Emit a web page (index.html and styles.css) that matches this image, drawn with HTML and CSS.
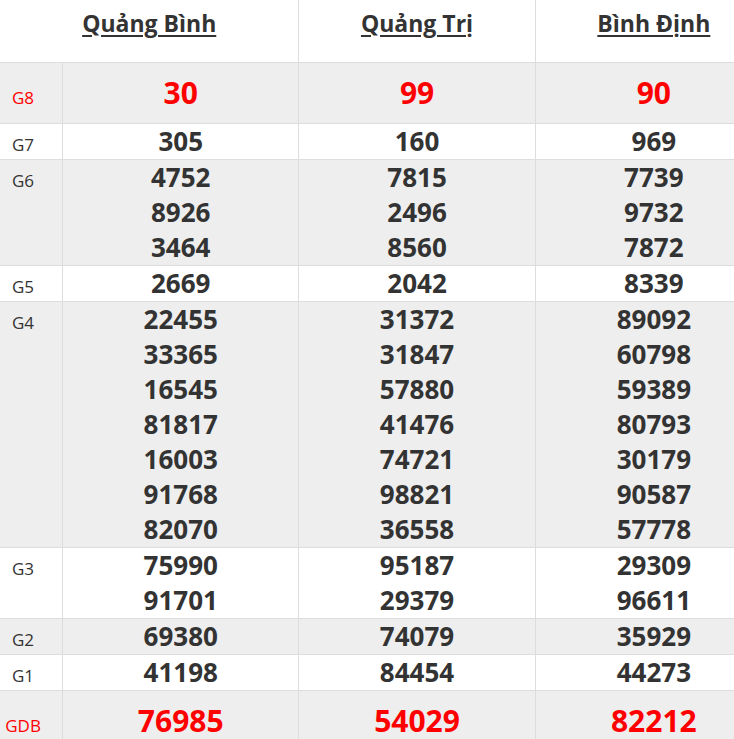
FILE: index.html
```html
<!DOCTYPE html>
<html lang="vi">
<head>
<meta charset="utf-8">
<title>Kết quả xổ số</title>
<link rel="stylesheet" href="styles.css">
</head>
<body>
<table class="kq">
  <colgroup>
    <col class="c-label">
    <col class="c-prov">
    <col class="c-prov">
    <col class="c-prov">
  </colgroup>
  <thead>
    <tr class="head">
      <th colspan="2" class="prov"><a href="#">Quảng Bình</a></th>
      <th class="prov"><a href="#">Quảng Trị</a></th>
      <th class="prov last"><a href="#">Bình Định</a></th>
    </tr>
  </thead>
  <tbody>
    <tr class="alt big">
      <td class="lbl red">G8</td>
      <td class="num red">30</td>
      <td class="num red">99</td>
      <td class="num red last">90</td>
    </tr>
    <tr>
      <td class="lbl">G7</td>
      <td class="num">305</td>
      <td class="num">160</td>
      <td class="num last">969</td>
    </tr>
    <tr class="alt">
      <td class="lbl">G6</td>
      <td class="num"><div>4752</div><div>8926</div><div>3464</div></td>
      <td class="num"><div>7815</div><div>2496</div><div>8560</div></td>
      <td class="num last"><div>7739</div><div>9732</div><div>7872</div></td>
    </tr>
    <tr>
      <td class="lbl">G5</td>
      <td class="num">2669</td>
      <td class="num">2042</td>
      <td class="num last">8339</td>
    </tr>
    <tr class="alt">
      <td class="lbl">G4</td>
      <td class="num"><div>22455</div><div>33365</div><div>16545</div><div>81817</div><div>16003</div><div>91768</div><div>82070</div></td>
      <td class="num"><div>31372</div><div>31847</div><div>57880</div><div>41476</div><div>74721</div><div>98821</div><div>36558</div></td>
      <td class="num last"><div>89092</div><div>60798</div><div>59389</div><div>80793</div><div>30179</div><div>90587</div><div>57778</div></td>
    </tr>
    <tr>
      <td class="lbl">G3</td>
      <td class="num"><div>75990</div><div>91701</div></td>
      <td class="num"><div>95187</div><div>29379</div></td>
      <td class="num last"><div>29309</div><div>96611</div></td>
    </tr>
    <tr class="alt">
      <td class="lbl">G2</td>
      <td class="num">69380</td>
      <td class="num">74079</td>
      <td class="num last">35929</td>
    </tr>
    <tr>
      <td class="lbl">G1</td>
      <td class="num">41198</td>
      <td class="num">84454</td>
      <td class="num last">44273</td>
    </tr>
    <tr class="alt big">
      <td class="lbl red">GDB</td>
      <td class="num red">76985</td>
      <td class="num red">54029</td>
      <td class="num red last">82212</td>
    </tr>
  </tbody>
</table>
</body>
</html>
```
FILE: styles.css
```css
html, body {
  margin: 0;
  padding: 0;
  overflow: hidden;
  background: #fff;
}

body {
  font-family: "Open Sans", "Liberation Sans", sans-serif;
  color: #333;
}

.kq {
  border-collapse: separate;
  border-spacing: 0;
  table-layout: fixed;
  width: 772px;
}

.c-label { width: 63px; }
.c-prov { width: 236px; }

.kq th,
.kq td {
  padding: 0;
  border-right: 1px solid #ddd;
  border-bottom: 1px solid #ddd;
  vertical-align: baseline;
}

.kq .last { border-right: 0; }

.head th {
  height: 62px;
  box-sizing: border-box;
  padding: 6px 0 21px;
  font-size: 23px;
  line-height: 35px;
  font-weight: 700;
  text-align: center;
  vertical-align: top;
}

.head a {
  color: #333;
  text-decoration: underline;
  text-decoration-thickness: 2px;
  text-underline-offset: 3px;
}

.alt td { background: #eee; }

.kq .lbl {
  font-size: 17px;
  line-height: 24px;
  text-align: center;
  padding-right: 16px;
  color: #333;
}

.num {
  font-size: 26px;
  line-height: 35px;
  font-weight: 700;
  text-align: center;
  color: #333;
}

.big .num {
  font-size: 30px;
  line-height: 60px;
}

.kq .red { color: #f00; }
```
